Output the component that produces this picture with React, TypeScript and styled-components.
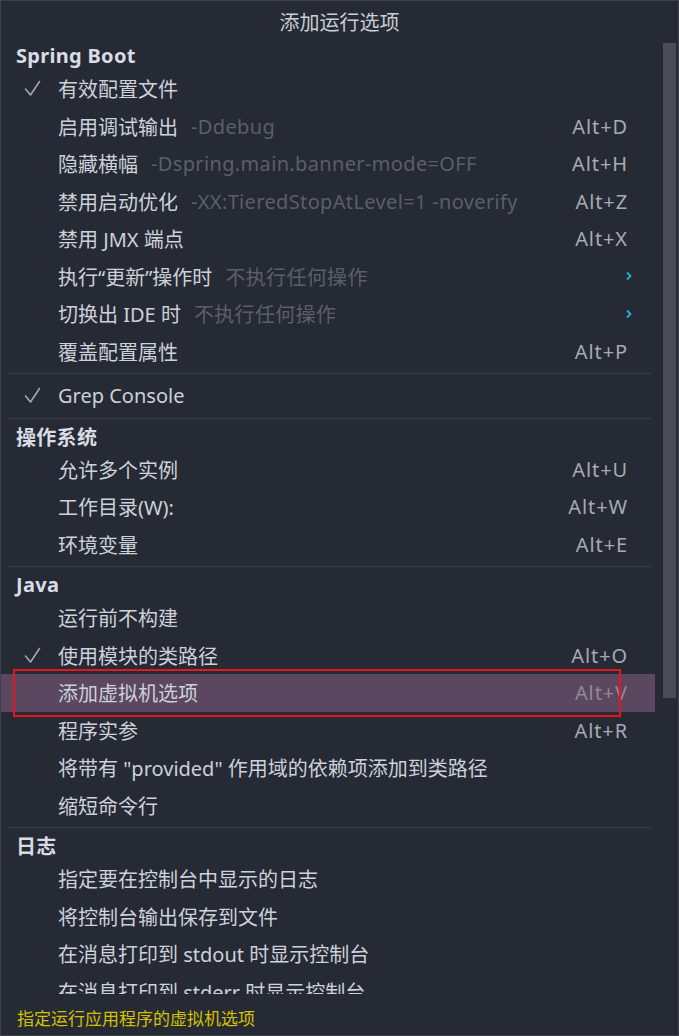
import React from 'react'
import styled, { createGlobalStyle } from 'styled-components'

const GlobalStyle = createGlobalStyle`
  html, body {
    margin: 0;
    padding: 0;
    background: #262a35;
  }
  * {
    box-sizing: border-box;
  }
`

const FONT = `"Noto Sans", "Noto Sans CJK SC", sans-serif`

const Window = styled.div`
  width: 679px;
  height: 1036px;
  display: flex;
  flex-direction: column;
  background: #262a35;
  border: 1px solid #3e414a;
  font-family: ${FONT};
  font-size: 20px;
  color: #cdd1d9;
  overflow: hidden;
`

const Title = styled.div`
  height: 40px;
  flex: none;
  display: flex;
  align-items: center;
  justify-content: center;
  color: #c9cdd5;
`

const Body = styled.div`
  flex: 1;
  display: flex;
  min-height: 0;
`

const List = styled.div`
  flex: 1;
  overflow: hidden;
  display: flex;
  flex-direction: column;
`

const ScrollTrack = styled.div`
  width: 23px;
  flex: none;
  padding: 2px 1px 0 8px;
`

const ScrollThumb = styled.div`
  width: 13px;
  height: 655px;
  background: #4a4d57;
`

const Header = styled.div`
  height: 29px;
  flex: none;
  display: flex;
  align-items: center;
  padding-left: 15px;
  font-weight: 700;
  letter-spacing: 0.3px;
  color: #d9dce3;
`

const Separator = styled.div`
  height: 7px;
  flex: none;
  padding: 3px 4px 0 7px;

  &::after {
    content: '';
    display: block;
    height: 1px;
    background: #3a3e4b;
  }
`

const Row = styled.div<{ $selected?: boolean }>`
  position: relative;
  height: 37.5px;
  flex: none;
  display: flex;
  align-items: center;
  padding: 0 27px 0 0;
  background: ${({ $selected }) => ($selected ? '#5c4760' : 'transparent')};
  white-space: nowrap;
`

const CheckCell = styled.div`
  width: 57px;
  flex: none;
  display: flex;
  align-items: center;
  padding-left: 23px;
`

const Label = styled.span`
  color: #cdd1d9;
`

const Hint = styled.span`
  margin-left: 13px;
  color: #5b5f69;
  letter-spacing: 0.35px;
`

const Spacer = styled.span`
  flex: 1;
`

const Shortcut = styled.span<{ $selected?: boolean }>`
  color: ${({ $selected }) => ($selected ? '#8e8a95' : '#a6aab2')};
  letter-spacing: 0.9px;
`

const Chevron = styled.svg`
  margin-right: -5px;
  display: block;
`

const Callout = styled.div`
  position: absolute;
  left: 12px;
  top: -5px;
  width: 608px;
  height: 48px;
  border: 2px solid #e8141f;
  pointer-events: none;
`

const Status = styled.div`
  height: 41px;
  flex: none;
  display: flex;
  align-items: center;
  padding: 6px 0 0 16px;
  color: #d3c100;
  font-size: 17px;
`

type Item = {
  kind: 'item'
  label: string
  hint?: string
  shortcut?: string
  checked?: boolean
  submenu?: boolean
  selected?: boolean
}

type Entry = Item | { kind: 'header'; label: string } | { kind: 'sep' }

const entries: Entry[] = [
  { kind: 'header', label: 'Spring Boot' },
  { kind: 'item', label: '有效配置文件', checked: true },
  { kind: 'item', label: '启用调试输出', hint: '-Ddebug', shortcut: 'Alt+D' },
  { kind: 'item', label: '隐藏横幅', hint: '-Dspring.main.banner-mode=OFF', shortcut: 'Alt+H' },
  { kind: 'item', label: '禁用启动优化', hint: '-XX:TieredStopAtLevel=1 -noverify', shortcut: 'Alt+Z' },
  { kind: 'item', label: '禁用 JMX 端点', shortcut: 'Alt+X' },
  { kind: 'item', label: '执行“更新”操作时', hint: '不执行任何操作', submenu: true },
  { kind: 'item', label: '切换出 IDE 时', hint: '不执行任何操作', submenu: true },
  { kind: 'item', label: '覆盖配置属性', shortcut: 'Alt+P' },
  { kind: 'sep' },
  { kind: 'item', label: 'Grep Console', checked: true },
  { kind: 'sep' },
  { kind: 'header', label: '操作系统' },
  { kind: 'item', label: '允许多个实例', shortcut: 'Alt+U' },
  { kind: 'item', label: '工作目录(W):', shortcut: 'Alt+W' },
  { kind: 'item', label: '环境变量', shortcut: 'Alt+E' },
  { kind: 'sep' },
  { kind: 'header', label: 'Java' },
  { kind: 'item', label: '运行前不构建' },
  { kind: 'item', label: '使用模块的类路径', shortcut: 'Alt+O', checked: true },
  { kind: 'item', label: '添加虚拟机选项', shortcut: 'Alt+V', selected: true },
  { kind: 'item', label: '程序实参', shortcut: 'Alt+R' },
  { kind: 'item', label: '将带有 "provided" 作用域的依赖项添加到类路径' },
  { kind: 'item', label: '缩短命令行' },
  { kind: 'sep' },
  { kind: 'header', label: '日志' },
  { kind: 'item', label: '指定要在控制台中显示的日志' },
  { kind: 'item', label: '将控制台输出保存到文件' },
  { kind: 'item', label: '在消息打印到 stdout 时显示控制台' },
  { kind: 'item', label: '在消息打印到 stderr 时显示控制台' },
]

const CheckMark = () => (
  <svg width="17" height="17" viewBox="0 0 17 17">
    <polyline
      points="1.5,9 6.5,15 15.5,1.5"
      fill="none"
      stroke="#a3a7af"
      strokeWidth="1.6"
      strokeLinecap="round"
      strokeLinejoin="round"
    />
  </svg>
)

const MenuRow: React.FC<{ item: Item }> = ({ item }) => (
  <Row $selected={item.selected}>
    <CheckCell>{item.checked && <CheckMark />}</CheckCell>
    <Label>{item.label}</Label>
    {item.hint && <Hint>{item.hint}</Hint>}
    <Spacer />
    {item.shortcut && <Shortcut $selected={item.selected}>{item.shortcut}</Shortcut>}
    {item.submenu && (
      <Chevron width="8" height="12" viewBox="0 0 8 12">
        <polyline
          points="2,2.5 5.5,6 2,9.5"
          fill="none"
          stroke="#1eb3d6"
          strokeWidth="1.8"
        />
      </Chevron>
    )}
    {item.selected && <Callout />}
  </Row>
)

export default function App() {
  return (
    <>
      <GlobalStyle />
      <Window>
        <Title>添加运行选项</Title>
        <Body>
          <List>
            {entries.map((e, i) => {
              if (e.kind === 'header') return <Header key={i}>{e.label}</Header>
              if (e.kind === 'sep') return <Separator key={i} />
              return <MenuRow key={i} item={e} />
            })}
          </List>
          <ScrollTrack>
            <ScrollThumb />
          </ScrollTrack>
        </Body>
        <Status>指定运行应用程序的虚拟机选项</Status>
      </Window>
    </>
  )
}
